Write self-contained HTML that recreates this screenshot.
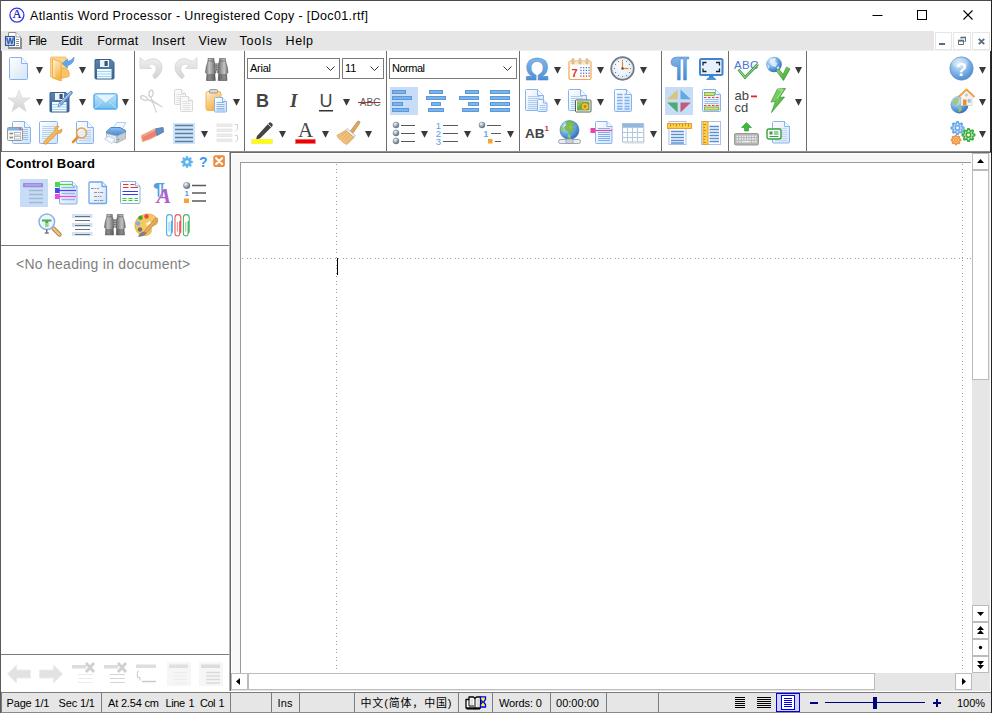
<!DOCTYPE html>
<html><head><meta charset="utf-8"><title>Atlantis Word Processor - Unregistered Copy - [Doc01.rtf]</title>
<style>
html,body{margin:0;padding:0;}
body{width:992px;height:713px;overflow:hidden;position:relative;background:#fff;
 font-family:"Liberation Sans","Noto Sans CJK SC",sans-serif;}
.t{position:absolute;white-space:nowrap;}
.a{position:absolute;}
.i{position:absolute;overflow:visible;}
div{box-sizing:border-box;}
</style></head><body>

<div style="position:absolute;left:0px;top:0px;width:992px;height:713px;background:#fff;"></div>
<span id="title" class="t" style="left:30px;top:8px;font-size:12.5px;line-height:16.5px;color:#000;letter-spacing:0.36px;">Atlantis Word Processor - Unregistered Copy - [Doc01.rtf]</span>
<svg class="i" style="left:860px;top:0" width="132" height="31" viewBox="0 0 132 31"><path d="M12.5 15.5H22.5" stroke="#000" stroke-width="1" fill="none"/><rect x="57.5" y="10.5" width="9" height="9" stroke="#000" stroke-width="1" fill="none"/><path d="M103.5 10.5L112.5 19.5M112.5 10.5L103.5 19.5" stroke="#000" stroke-width="1.1" fill="none"/></svg>
<div style="position:absolute;left:1px;top:31px;width:933px;height:19px;background:#e6e6e6;"></div>
<div style="position:absolute;left:1px;top:50px;width:990px;height:1px;background:#f0f0f0;"></div>
<span id="mFile" class="t" style="left:28.4px;top:33px;font-size:12.5px;line-height:16.5px;color:#000;letter-spacing:-0.55px;">File</span>
<span id="mEdit" class="t" style="left:61px;top:33px;font-size:12.5px;line-height:16.5px;color:#000;letter-spacing:-0.02px;">Edit</span>
<span id="mFormat" class="t" style="left:97.2px;top:33px;font-size:12.5px;line-height:16.5px;color:#000;letter-spacing:0.28px;">Format</span>
<span id="mInsert" class="t" style="left:152px;top:33px;font-size:12.5px;line-height:16.5px;color:#000;letter-spacing:0.35px;">Insert</span>
<span id="mView" class="t" style="left:198.5px;top:33px;font-size:12.5px;line-height:16.5px;color:#000;letter-spacing:0.38px;">View</span>
<span id="mTools" class="t" style="left:239.5px;top:33px;font-size:12.5px;line-height:16.5px;color:#000;letter-spacing:0.83px;">Tools</span>
<span id="mHelp" class="t" style="left:285.6px;top:33px;font-size:12.5px;line-height:16.5px;color:#000;letter-spacing:0.59px;">Help</span>
<div style="position:absolute;left:935px;top:32px;width:17px;height:18px;background:#fff;border:1px solid #e6e6e6;"></div>
<div style="position:absolute;left:953px;top:32px;width:18px;height:18px;background:#fff;border:1px solid #e6e6e6;"></div>
<div style="position:absolute;left:972px;top:32px;width:18px;height:18px;background:#fff;border:1px solid #e6e6e6;"></div>
<svg class="i" style="left:935px;top:32px" width="56" height="18" viewBox="0 0 56 18"><rect x="4" y="11" width="6" height="2" fill="#5a6e84"/><path d="M23.500 9H28.500V12.500H23.500Z" stroke="#5a6e84" stroke-width="1" fill="none"/><path d="M23 8.500H29" stroke="#5a6e84" stroke-width="1.600"/><path d="M26 6.500V5.500H30.500V9.500H29.500" stroke="#5a6e84" stroke-width="1" fill="none"/><path d="M25.500 5.500H31" stroke="#5a6e84" stroke-width="1.600"/><path d="M43.800 6.800L49.200 12.200M49.200 6.800L43.800 12.200" stroke="#5a6e84" stroke-width="1.900" fill="none"/></svg>
<div style="position:absolute;left:1px;top:51px;width:990px;height:100px;background:#fff;"></div>
<div style="position:absolute;left:134px;top:51px;width:1px;height:100px;background:#6e6e6e;"></div>
<div style="position:absolute;left:244px;top:51px;width:1px;height:100px;background:#6e6e6e;"></div>
<div style="position:absolute;left:386px;top:51px;width:1px;height:100px;background:#6e6e6e;"></div>
<div style="position:absolute;left:519px;top:51px;width:1px;height:100px;background:#6e6e6e;"></div>
<div style="position:absolute;left:661px;top:51px;width:1px;height:100px;background:#6e6e6e;"></div>
<div style="position:absolute;left:728px;top:51px;width:1px;height:100px;background:#6e6e6e;"></div>
<div style="position:absolute;left:806px;top:51px;width:1px;height:100px;background:#6e6e6e;"></div>
<div style="position:absolute;left:1px;top:151px;width:990px;height:1px;background:#767676;"></div>
<div style="position:absolute;left:247px;top:58px;width:93px;height:21px;background:#fff;border:1px solid #7a7a7a;"></div>
<span id="cFont" class="t" style="left:250px;top:61px;font-size:11px;line-height:15px;color:#000;letter-spacing:-0.25px;">Arial</span>
<svg class="i" style="left:326px;top:66px" width="9" height="6" viewBox="0 0 9 6"><path d="M0.500 0.500L4.500 4.500L8.500 0.500" stroke="#333" stroke-width="1" fill="none"/></svg>
<div style="position:absolute;left:342px;top:58px;width:42px;height:21px;background:#fff;border:1px solid #7a7a7a;"></div>
<span id="cSize" class="t" style="left:345px;top:61px;font-size:11px;line-height:15px;color:#000;letter-spacing:0px;">11</span>
<svg class="i" style="left:370px;top:66px" width="9" height="6" viewBox="0 0 9 6"><path d="M0.500 0.500L4.500 4.500L8.500 0.500" stroke="#333" stroke-width="1" fill="none"/></svg>
<div style="position:absolute;left:389px;top:58px;width:128px;height:21px;background:#fff;border:1px solid #7a7a7a;"></div>
<span id="cStyle" class="t" style="left:392px;top:61px;font-size:11px;line-height:15px;color:#000;letter-spacing:-0.49px;">Normal</span>
<svg class="i" style="left:503px;top:66px" width="9" height="6" viewBox="0 0 9 6"><path d="M0.500 0.500L4.500 4.500L8.500 0.500" stroke="#333" stroke-width="1" fill="none"/></svg>
<div style="position:absolute;left:1px;top:152px;width:228px;height:539px;background:#fff;"></div>
<span id="cb" class="t" style="left:6px;top:155px;font-size:13px;line-height:17px;color:#000;letter-spacing:0.13px;font-weight:bold;">Control Board</span>
<div style="position:absolute;left:1px;top:245px;width:228px;height:1px;background:#7a7a7a;"></div>
<span id="nohead" class="t" style="left:16px;top:255px;font-size:14px;line-height:18px;color:#808080;letter-spacing:0.26px;">&lt;No heading in document&gt;</span>
<div style="position:absolute;left:1px;top:654px;width:228px;height:1px;background:#7a7a7a;"></div>
<div style="position:absolute;left:229px;top:151px;width:1px;height:540px;background:#b4b4b4;"></div>
<div style="position:absolute;left:229px;top:151px;width:761px;height:1px;background:#8e8e8e;"></div>
<div style="position:absolute;left:230px;top:152px;width:1px;height:539px;background:#6a6a6a;"></div>
<div style="position:absolute;left:230px;top:152px;width:761px;height:1px;background:#6a6a6a;"></div>
<div style="position:absolute;left:231px;top:153px;width:740px;height:520px;background:#fff;"></div>
<div style="position:absolute;left:232px;top:154px;width:739px;height:519px;background:#f8f8f8;"></div>
<div style="position:absolute;left:240px;top:162px;width:731px;height:511px;background:#fff;border-left:1px solid #9a9a9a;border-top:1px solid #9a9a9a;"></div>
<div style="position:absolute;left:241px;top:258px;width:730px;height:1px;background:repeating-linear-gradient(90deg,transparent 0px,transparent 1px,#9c9c9c 1px 2px,transparent 2px,transparent 6px,#9c9c9c 6px 7px,transparent 7px,transparent 8px);"></div>
<div style="position:absolute;left:336px;top:163px;width:1px;height:509px;background:repeating-linear-gradient(180deg,transparent 0px,transparent 1px,#9c9c9c 1px 2px,transparent 2px,transparent 6px,#9c9c9c 6px 7px,transparent 7px,transparent 8px);"></div>
<div style="position:absolute;left:962px;top:163px;width:1px;height:509px;background:repeating-linear-gradient(180deg,transparent 0px,transparent 1px,#9c9c9c 1px 2px,transparent 2px,transparent 6px,#9c9c9c 6px 7px,transparent 7px,transparent 8px);"></div>
<div style="position:absolute;left:337px;top:258px;width:1px;height:17px;background:#000;"></div>
<div style="position:absolute;left:972px;top:153px;width:18px;height:520px;background:#e6e6e6;"></div>
<div style="position:absolute;left:972px;top:170px;width:17px;height:210px;background:#fff;border:1px solid #bcbcbc;"></div>
<div style="position:absolute;left:972px;top:153px;width:17px;height:17px;background:#fff;border:1px solid #bcbcbc;"></div>
<svg class="i" style="left:972px;top:153px" width="17" height="17" viewBox="0 0 17 17"><path d="M5 10H12L8.500 6Z" fill="#000"/></svg>
<div style="position:absolute;left:972px;top:605px;width:17px;height:17px;background:#fff;border:1px solid #bcbcbc;"></div>
<svg class="i" style="left:972px;top:605px" width="17" height="17" viewBox="0 0 17 17"><path d="M5 7H12L8.500 11Z" fill="#000"/></svg>
<div style="position:absolute;left:972px;top:622px;width:17px;height:17px;background:#fff;border:1px solid #bcbcbc;"></div>
<svg class="i" style="left:972px;top:622px" width="17" height="17" viewBox="0 0 17 17"><path d="M5 8H12L8.500 4ZM5 12H12L8.500 8Z" fill="#000"/></svg>
<div style="position:absolute;left:972px;top:639px;width:17px;height:17px;background:#fff;border:1px solid #bcbcbc;"></div>
<svg class="i" style="left:972px;top:639px" width="17" height="17" viewBox="0 0 17 17"><circle cx="8.500" cy="8.500" r="1.700" fill="#000"/></svg>
<div style="position:absolute;left:972px;top:656px;width:17px;height:17px;background:#fff;border:1px solid #bcbcbc;"></div>
<svg class="i" style="left:972px;top:656px" width="17" height="17" viewBox="0 0 17 17"><path d="M5 5H12L8.500 9ZM5 9H12L8.500 13Z" fill="#000"/></svg>
<div style="position:absolute;left:231px;top:673px;width:759px;height:18px;background:#e6e6e6;"></div>
<div style="position:absolute;left:248px;top:673px;width:627px;height:17px;background:#fff;border:1px solid #bcbcbc;"></div>
<div style="position:absolute;left:231px;top:673px;width:17px;height:17px;background:#fff;border:1px solid #bcbcbc;"></div>
<svg class="i" style="left:231px;top:673px" width="17" height="17" viewBox="0 0 17 17"><path d="M9 5V12L5 8.500Z" fill="#000"/></svg>
<div style="position:absolute;left:955px;top:673px;width:17px;height:17px;background:#fff;border:1px solid #bcbcbc;"></div>
<svg class="i" style="left:955px;top:673px" width="17" height="17" viewBox="0 0 17 17"><path d="M7 5V12L11 8.500Z" fill="#000"/></svg>
<div style="position:absolute;left:1px;top:691px;width:990px;height:1px;background:#fff;"></div>
<div style="position:absolute;left:0px;top:692px;width:992px;height:21px;background:#e6e6e6;"></div>
<div style="position:absolute;left:0px;top:692px;width:992px;height:1px;background:#7c7c7c;"></div>
<div style="position:absolute;left:0px;top:712px;width:992px;height:1px;background:#8a8a8a;"></div>
<div style="position:absolute;left:1px;top:693px;width:1px;height:19px;background:#7c7c7c;"></div>
<div style="position:absolute;left:101px;top:693px;width:1px;height:19px;background:#7c7c7c;"></div>
<div style="position:absolute;left:230px;top:693px;width:1px;height:19px;background:#7c7c7c;"></div>
<div style="position:absolute;left:271px;top:693px;width:1px;height:19px;background:#7c7c7c;"></div>
<div style="position:absolute;left:299px;top:693px;width:1px;height:19px;background:#7c7c7c;"></div>
<div style="position:absolute;left:354px;top:693px;width:1px;height:19px;background:#7c7c7c;"></div>
<div style="position:absolute;left:458px;top:693px;width:1px;height:19px;background:#7c7c7c;"></div>
<div style="position:absolute;left:492px;top:693px;width:1px;height:19px;background:#7c7c7c;"></div>
<div style="position:absolute;left:550px;top:693px;width:1px;height:19px;background:#7c7c7c;"></div>
<div style="position:absolute;left:606px;top:693px;width:1px;height:19px;background:#7c7c7c;"></div>
<div style="position:absolute;left:658px;top:693px;width:1px;height:19px;background:#7c7c7c;"></div>
<span id="sPage" class="t" style="left:6.5px;top:696px;font-size:11px;line-height:15px;color:#000;letter-spacing:-0.15px;">Page 1/1</span>
<span id="sSec" class="t" style="left:58.5px;top:696px;font-size:11px;line-height:15px;color:#000;letter-spacing:-0.14px;">Sec 1/1</span>
<span id="sAt" class="t" style="left:108px;top:696px;font-size:11px;line-height:15px;color:#000;letter-spacing:-0.18px;">At 2.54 cm</span>
<span id="sLine" class="t" style="left:165.5px;top:696px;font-size:11px;line-height:15px;color:#000;letter-spacing:-0.43px;">Line</span>
<span id="sLine1" class="t" style="left:188.5px;top:696px;font-size:11px;line-height:15px;color:#000;letter-spacing:0px;">1</span>
<span id="sCol" class="t" style="left:200px;top:696px;font-size:11px;line-height:15px;color:#000;letter-spacing:-0.51px;">Col</span>
<span id="sCol1" class="t" style="left:218.5px;top:696px;font-size:11px;line-height:15px;color:#000;letter-spacing:0px;">1</span>
<span id="sIns" class="t" style="left:277.5px;top:696px;font-size:11px;line-height:15px;color:#000;letter-spacing:0.16px;">Ins</span>
<span id="sLang" class="t" style="left:360.5px;top:696px;font-size:11px;line-height:15px;color:#000;letter-spacing:0.83px;">中文(简体，中国)</span>
<span id="sWords" class="t" style="left:499px;top:696px;font-size:11px;line-height:15px;color:#000;letter-spacing:-0.12px;">Words: 0</span>
<span id="sTime" class="t" style="left:556px;top:696px;font-size:11px;line-height:15px;color:#000;letter-spacing:0.02px;">00:00:00</span>
<span id="sZoom" class="t" style="left:957px;top:696px;font-size:11px;line-height:15px;color:#000;letter-spacing:-0.05px;">100%</span>
<svg class="i" style="left:730px;top:692px" width="225" height="21" viewBox="0 0 225 21"><g stroke="#000" stroke-width="1" fill="none"><path d="M5 5.500H15M5 7.500H15M5 9.500H15M5 11.500H15M5 13.500H15M5 15.500H15"/><path d="M27 5.500H41M27 7.500H41M27 9.500H41M27 11.500H41M27 13.500H41M27 15.500H41"/></g><rect x="46.500" y="1.500" width="23" height="18" fill="#d2d2f6" stroke="#0000f0" stroke-width="1"/><rect x="51.500" y="3.500" width="13" height="14" fill="#fff" stroke="#0000f0"/><path d="M54 6.500H62M54 8.500H62M54 10.500H62M54 12.500H62M54 14.500H62" stroke="#0000f0"/><path d="M80 11H88" stroke="#000080" stroke-width="2"/><path d="M95 10.500H195" stroke="#000080" stroke-width="1"/><rect x="143" y="5" width="4" height="12" fill="#000080"/><path d="M203 11H211M207 7V15" stroke="#000080" stroke-width="2"/></svg>
<div style="position:absolute;left:0px;top:0px;width:992px;height:1px;background:#4a4a4a;"></div>
<div style="position:absolute;left:0px;top:0px;width:1px;height:713px;background:#5a5a5a;"></div>
<div style="position:absolute;left:991px;top:0px;width:1px;height:713px;background:#222;"></div>
<div style="position:absolute;left:990px;top:51px;width:1px;height:101px;background:#2e2e2e;"></div>
<div style="position:absolute;left:1px;top:51px;width:1px;height:101px;background:#6a6a6a;"></div>
<svg width="0" height="0" style="position:absolute"><defs>
<linearGradient id="gDoc" x1="0" y1="0" x2="1" y2="1"><stop offset="0" stop-color="#ffffff"/><stop offset="1" stop-color="#d3e3f8"/></linearGradient>
<linearGradient id="gDocV" x1="0" y1="0" x2="0" y2="1"><stop offset="0" stop-color="#fafcff"/><stop offset="1" stop-color="#dce9fa"/></linearGradient>
<linearGradient id="gFold" x1="0" y1="0" x2="1" y2="1"><stop offset="0" stop-color="#fde3a8"/><stop offset="1" stop-color="#f3a73a"/></linearGradient>
<linearGradient id="gFlop" x1="0" y1="0" x2="0" y2="1"><stop offset="0" stop-color="#5a84b0"/><stop offset="1" stop-color="#3a6290"/></linearGradient>
<linearGradient id="gEnv" x1="0" y1="0" x2="0" y2="1"><stop offset="0" stop-color="#c9e9fc"/><stop offset="1" stop-color="#6dbdf0"/></linearGradient>
<linearGradient id="gGray" x1="0" y1="0" x2="0" y2="1"><stop offset="0" stop-color="#f0f0f0"/><stop offset="1" stop-color="#d2d2d2"/></linearGradient>
<linearGradient id="gGrayD" x1="0" y1="0" x2="0" y2="1"><stop offset="0" stop-color="#b4b4b4"/><stop offset="0.600" stop-color="#8a8a8a"/><stop offset="1" stop-color="#6e6e6e"/></linearGradient>
<linearGradient id="gBlue" x1="0" y1="0" x2="0" y2="1"><stop offset="0" stop-color="#8fc0f0"/><stop offset="1" stop-color="#3f86d0"/></linearGradient>
<linearGradient id="gOr" x1="0" y1="0" x2="1" y2="1"><stop offset="0" stop-color="#fbd38a"/><stop offset="1" stop-color="#ee9a2a"/></linearGradient>
<linearGradient id="gGreen" x1="0" y1="0" x2="1" y2="1"><stop offset="0" stop-color="#9be07a"/><stop offset="1" stop-color="#2f9e2a"/></linearGradient>
<radialGradient id="gBall" cx="0.35" cy="0.3" r="0.8"><stop offset="0" stop-color="#ffffff"/><stop offset="0.450" stop-color="#a4b2c2"/><stop offset="1" stop-color="#465464"/></radialGradient>
<radialGradient id="gGlobe" cx="0.35" cy="0.3" r="0.8"><stop offset="0" stop-color="#e8f4ff"/><stop offset="0.5" stop-color="#6aaae8"/><stop offset="1" stop-color="#2a60b0"/></radialGradient>
<radialGradient id="gHelp" cx="0.4" cy="0.3" r="0.8"><stop offset="0" stop-color="#d8ecfc"/><stop offset="0.550" stop-color="#7cb0e4"/><stop offset="1" stop-color="#3f7ec8"/></radialGradient>
<radialGradient id="gClock" cx="0.45" cy="0.4" r="0.7"><stop offset="0" stop-color="#ffffff"/><stop offset="0.7" stop-color="#e4eef8"/><stop offset="1" stop-color="#b8cce0"/></radialGradient>

<linearGradient id="gBar" x1="0" y1="0" x2="1" y2="0"><stop offset="0" stop-color="#6e6e6e"/><stop offset="0.350" stop-color="#c4c4c4"/><stop offset="0.650" stop-color="#9a9a9a"/><stop offset="1" stop-color="#606060"/></linearGradient>
<linearGradient id="gPaste" x1="0" y1="0" x2="0.600" y2="1"><stop offset="0" stop-color="#fef1d0"/><stop offset="1" stop-color="#f5ad3c"/></linearGradient>
<linearGradient id="gFold2" x1="0" y1="0" x2="0.300" y2="1"><stop offset="0" stop-color="#fef0cc"/><stop offset="1" stop-color="#f7b548"/></linearGradient></defs></svg>
<svg class="i" style="left:8px;top:56px" width="22" height="26" viewBox="0 0 22 26"><path d="M2.5 1.5H13.5L19.5 7.5V22.5Q19.5 23.5 18.5 23.5H2.5Q1.5 23.5 1.5 22.5V2.5Q1.5 1.5 2.5 1.5Z" fill="url(#gDoc)" stroke="#86b4f0" stroke-width="1"/><path d="M13.5 1.5V7.5H19.5" fill="#f4f9ff" stroke="#86b4f0" stroke-width="1" stroke-linejoin="round"/></svg>
<svg class="i" style="left:49px;top:56px" width="26" height="26" viewBox="0 0 26 26"><path d="M1.500 2Q1.500 1 2.500 1H16Q17 1 17.200 2V19.500L1.500 21Z" fill="#fbd490" stroke="#f2b860" stroke-width="0.800"/><path d="M12.200 12Q17 11 19 14Q21 17 20 20.500L12.200 22.500Z" fill="#f9c468" stroke="#f0a840" stroke-width="0.800"/><path d="M3.600 2.800L12.200 6V25L3.600 22Z" fill="url(#gFold2)" stroke="#f2a83c" stroke-width="0.900" stroke-linejoin="round"/><path d="M5 5V21" stroke="#fff" stroke-opacity="0.700" stroke-width="1"/><path d="M13.100 7.500L18.500 3V5.300Q22.500 5 25 1Q25.500 7.500 18.500 9.800V12Z" fill="#62a6ea" stroke="#4a8ad8" stroke-width="0.600" stroke-linejoin="round"/></svg>
<svg class="i" style="left:94px;top:59px" width="22" height="22" viewBox="0 0 22 22"><g transform="translate(0.5,0)"><path d="M1 .5H16.500L19.500 3.500V19Q19.500 20 18.500 20H1.500Q.5 20 .5 19V1Q.5 .5 1 .5Z" fill="url(#gFlop)" stroke="#3a5e8c" stroke-width="1"/><rect x="5.500" y="1" width="9" height="7" fill="#eef2f6"/><rect x="10" y="2" width="3.200" height="5" fill="#33557c"/><rect x="2.500" y="10" width="14.500" height="9.500" fill="#f4fbff"/><path d="M2.500 12.500H17M2.500 15H17M2.500 17.500H17" stroke="#9ad4f6" stroke-width="1.200"/></g></svg>
<svg class="i" style="left:7px;top:89px" width="24" height="24" viewBox="0 0 24 24"><path d="M12 1L15 9H23L16.500 14L19 22.500L12 17.500L5 22.500L7.500 14L1 9H9Z" fill="url(#gGray)" stroke="#dcdcdc" stroke-width="0.800" stroke-linejoin="round"/></svg>
<svg class="i" style="left:49px;top:89px" width="26" height="24" viewBox="0 0 26 24"><g transform="translate(0.5,3)"><path d="M1 .5H16.500L19.500 3.500V19Q19.500 20 18.500 20H1.500Q.5 20 .5 19V1Q.5 .5 1 .5Z" fill="url(#gFlop)" stroke="#3a5e8c" stroke-width="1"/><rect x="5.500" y="1" width="9" height="7" fill="#eef2f6"/><rect x="10" y="2" width="3.200" height="5" fill="#33557c"/><rect x="2.500" y="10" width="14.500" height="9.500" fill="#f4fbff"/><path d="M2.500 12.500H17M2.500 15H17M2.500 17.500H17" stroke="#9ad4f6" stroke-width="1.200"/></g><path d="M9 17.500L10.300 14L21 2.600Q22 1.800 23 2.600Q23.800 3.600 23 4.600L12.300 16.200Z" fill="#7aaae2" stroke="#3f6eb0" stroke-width="0.700" stroke-linejoin="round"/><path d="M11.500 14L21.500 3.500" stroke="#d8e8f8" stroke-width="0.700"/><path d="M9 17.500L10.300 14L12.300 16.200Z" fill="#f0f0f0" stroke="#777" stroke-width="0.500"/></svg>
<svg class="i" style="left:92.5px;top:92.5px" width="26" height="18" viewBox="0 0 26 18"><rect x="1" y="1" width="23" height="15" rx="1.500" fill="url(#gEnv)" stroke="#4fa9ea" stroke-width="1.400"/><path d="M1.500 1.500L12.500 10L23.500 1.500" fill="#e4f3fd" stroke="#8fcbf4" stroke-width="1"/><path d="M1.500 15.500L9.500 8M23.500 15.500L15.500 8" stroke="#bfe2f9" stroke-width="1" fill="none"/></svg>
<svg class="i" style="left:7px;top:120px" width="25" height="25" viewBox="0 0 25 25"><path d="M6.5 1.5H17.5L23.5 7.5V22.5Q23.5 23.5 22.5 23.5H6.5Q5.5 23.5 5.5 22.5V2.5Q5.5 1.5 6.5 1.5Z" fill="url(#gDoc)" stroke="#86b4f0" stroke-width="1"/><path d="M17.5 1.5V7.5H23.5" fill="#f4f9ff" stroke="#86b4f0" stroke-width="1" stroke-linejoin="round"/><path d="M13 9.5H21M13 11.5H21M13 13.5H21M13 15.5H21M13 17.5H21M13 19.5H21" stroke="#9cc0ea" stroke-width="1" fill="none"/><rect x="0.500" y="7.500" width="15" height="13" rx="1" fill="#f6f6f6" stroke="#9a9a9a"/><rect x="1" y="8" width="14" height="2.500" fill="#7fb2e8"/><rect x="12.500" y="8.500" width="1.500" height="1.500" fill="#e04040"/><path d="M2.500 13.500H6M2.500 17.500H6" stroke="#888" stroke-width="1.400"/><rect x="7.500" y="12.500" width="6" height="2.500" fill="#fff" stroke="#aaa" stroke-width="0.800"/><rect x="7.500" y="16.500" width="6" height="2.500" fill="#fff" stroke="#aaa" stroke-width="0.800"/></svg>
<svg class="i" style="left:38px;top:120px" width="26" height="25" viewBox="0 0 26 25"><rect x="1.500" y="1.500" width="18" height="22" rx="1" fill="url(#gDoc)" stroke="#86b4f0"/><path d="M4 6.5H17M4 8.5H17M4 10.5H17M4 12.5H17M4 14.5H17M4 16.5H17M4 18.5H17" stroke="#b8d2f0" stroke-width="1" fill="none"/><path d="M6 21.500L17 10.500Q16 7.500 18.500 6L21 6.500L19 9L21 11L23.500 9L24 11.500Q22.500 14 19.500 13L8.500 24Q7 24.500 6 23.500Q5.500 22.500 6 21.500Z" fill="url(#gOr)" stroke="#e0922a" stroke-width="0.800"/></svg>
<svg class="i" style="left:70px;top:120px" width="26" height="26" viewBox="0 0 26 26"><path d="M7.5 1.5H17.5L23.5 7.5V22.5Q23.5 23.5 22.5 23.5H7.5Q6.5 23.5 6.5 22.5V2.5Q6.5 1.5 7.5 1.5Z" fill="url(#gDoc)" stroke="#86b4f0" stroke-width="1"/><path d="M17.5 1.5V7.5H23.5" fill="#f4f9ff" stroke="#86b4f0" stroke-width="1" stroke-linejoin="round"/><path d="M9 10.5H21M9 12.5H21M9 14.5H21M9 16.5H21M9 18.5H21M9 20.5H21" stroke="#b8d2f0" stroke-width="1" fill="none"/><path d="M3 22L8 17" stroke="#e3902c" stroke-width="2.600" stroke-linecap="round"/><circle cx="11.500" cy="13" r="5" fill="#e4f0fb" fill-opacity="0.900" stroke="#e9a04a" stroke-width="1.600"/><path d="M8.500 12Q9.500 9.500 12 9.500" stroke="#fff" stroke-width="1.200" fill="none"/></svg>
<svg class="i" style="left:103px;top:121px" width="26" height="24" viewBox="0 0 26 24"><path d="M9 8L14 1.500H23L19 8.500Z" fill="#f4f9ff" stroke="#9cc4ee" stroke-width="0.800"/><path d="M3.500 10.500L8 6.500H17L22.500 9.500V11L14 15L3.500 12.500Z" fill="url(#gBlue)" stroke="#2f70b8" stroke-width="0.800"/><path d="M3.500 12.500L14 15V22L3.500 18.500Z" fill="#e6e9ec" stroke="#a8b0b8" stroke-width="0.800"/><path d="M14 15L22.500 11V17.500L14 22Z" fill="#c6ccd2" stroke="#a0a8b0" stroke-width="0.800"/><path d="M1.500 18L5.500 15.500L12 18L9 22.500Z" fill="#f8fbff" stroke="#a9c9ee" stroke-width="0.800"/><circle cx="15.500" cy="18.500" r="0.800" fill="#40c040"/></svg>
<svg class="i" style="left:139px;top:56px" width="26" height="26" viewBox="0 0 26 26"><path d="M1 1.500V12.500H12.500L9 9.500Q13.500 6.500 16.500 10Q19 14 13.500 19.500L16 23Q26 15 22 7Q17 -1 5.500 5.500Z" fill="url(#gGray)" stroke="#d6d6d6" stroke-width="0.800" stroke-linejoin="round"/></svg>
<svg class="i" style="left:171.5px;top:56px" width="26" height="26" viewBox="0 0 26 26"><g transform="translate(26,0) scale(-1,1)"><path d="M1 1.500V12.500H12.500L9 9.500Q13.500 6.500 16.500 10Q19 14 13.500 19.500L16 23Q26 15 22 7Q17 -1 5.500 5.500Z" fill="url(#gGray)" stroke="#d6d6d6" stroke-width="0.800" stroke-linejoin="round"/></g></svg>
<svg class="i" style="left:204.5px;top:57.5px" width="24" height="24" viewBox="0 0 24 24"><g transform="scale(1.0)"><path d="M3 0.500H9V3L9.500 4L10.500 9.500L11 14.500L9.800 16L10.300 22.500H1.500L2 16L0.500 14.500Q1 8 2.700 4L3 3Z" fill="url(#gBar)" stroke="#555" stroke-width="0.600" stroke-linejoin="round"/><path d="M2 16H9.800L10.300 22.500H1.500Z" fill="#4a4a4a" fill-opacity="0.450"/><path d="M3 3H9" stroke="#555" stroke-width="0.600"/><g transform="translate(23.500,0) scale(-1,1)"><path d="M3 0.500H9V3L9.500 4L10.500 9.500L11 14.500L9.800 16L10.300 22.500H1.500L2 16L0.500 14.500Q1 8 2.700 4L3 3Z" fill="url(#gBar)" stroke="#555" stroke-width="0.600" stroke-linejoin="round"/><path d="M2 16H9.800L10.300 22.500H1.500Z" fill="#4a4a4a" fill-opacity="0.450"/><path d="M3 3H9" stroke="#555" stroke-width="0.600"/></g><rect x="9.800" y="5.500" width="4" height="7.500" fill="#707070"/><path d="M10.500 6.300H13M10.500 8.300H13M10.500 10.300H13M10.500 12.200H13" stroke="#e0e0e0" stroke-width="0.900"/><path d="M11.750 5.500V13" stroke="#707070" stroke-width="0.800"/></g></svg>
<svg class="i" style="left:139px;top:88.5px" width="26" height="26" viewBox="0 0 26 26"><g fill="none" stroke="#cdcdcd" stroke-width="1.200"><ellipse cx="12" cy="4.500" rx="2" ry="3.500" transform="rotate(8 12 4.500)"/><ellipse cx="5" cy="9" rx="3.500" ry="2" transform="rotate(25 5 9)"/></g><path d="M12 8L17.500 23.500L13.500 13Z M8 10.500L23.500 18L14 11.500Z" fill="#e0e0e0" stroke="#cfcfcf" stroke-width="0.800" stroke-linejoin="round"/></svg>
<svg class="i" style="left:173px;top:88px" width="22" height="25" viewBox="0 0 22 25"><path d="M2.5 1.5H8.5L12.5 5.5V15.5Q12.5 16.5 11.5 16.5H2.5Q1.5 16.5 1.5 15.5V2.5Q1.5 1.5 2.5 1.5Z" fill="#f8f8f8" stroke="#d8d8d8" stroke-width="1"/><path d="M8.5 1.5V5.5H12.5" fill="#f4f9ff" stroke="#d8d8d8" stroke-width="1" stroke-linejoin="round"/><path d="M3.5 6.5H10.5M3.5 8.5H10.5M3.5 10.5H10.5M3.5 12.5H10.5M3.5 14.5H10.5" stroke="#e2e2e2" stroke-width="1" fill="none"/><path d="M8.5 8.5H15.5L19.5 12.5V22.5Q19.5 23.5 18.5 23.5H8.5Q7.5 23.5 7.5 22.5V9.5Q7.5 8.5 8.5 8.5Z" fill="#f8f8f8" stroke="#d8d8d8" stroke-width="1"/><path d="M15.5 8.5V12.5H19.5" fill="#f4f9ff" stroke="#d8d8d8" stroke-width="1" stroke-linejoin="round"/><path d="M9.5 13.5H17.5M9.5 15.5H17.5M9.5 17.5H17.5M9.5 19.5H17.5M9.5 21.5H17.5" stroke="#e2e2e2" stroke-width="1" fill="none"/></svg>
<svg class="i" style="left:204.5px;top:89px" width="24" height="25" viewBox="0 0 24 25"><rect x="1" y="2.500" width="15" height="19" rx="2" fill="url(#gPaste)" stroke="#f2b45a" stroke-width="1"/><rect x="4.500" y="0.500" width="8" height="3.500" rx="1" fill="#d8d8d8" stroke="#8a8a8a" stroke-width="0.800"/><path d="M10.5 8.5H17.5L21.5 12.5V22.0Q21.5 23.0 20.5 23.0H10.5Q9.5 23.0 9.5 22.0V9.5Q9.5 8.5 10.5 8.5Z" fill="url(#gDoc)" stroke="#86b4f0" stroke-width="1"/><path d="M17.5 8.5V12.5H21.5" fill="#f4f9ff" stroke="#86b4f0" stroke-width="1" stroke-linejoin="round"/><path d="M11.5 13.5H19.5M11.5 15.5H19.5M11.5 17.5H19.5M11.5 19.5H19.5M11.5 21H19.5" stroke="#8ab6ea" stroke-width="1" fill="none"/></svg>
<svg class="i" style="left:140px;top:125px" width="25" height="18" viewBox="0 0 25 18"><path d="M1.500 10.500L15 4L23 2.500L23.500 7L10 14L2.500 16.500Z" fill="#f08070" stroke="#e8a878" stroke-width="1" stroke-linejoin="round"/><path d="M15 4L23 2.500L23.500 7L17 10.500Z" fill="#5f8fc8" stroke="#4a78b0" stroke-width="0.600" stroke-linejoin="round"/><path d="M1.500 10.500L15 4L16 5.500L3 12Z" fill="#f8a898" fill-opacity="0.800"/></svg>
<svg class="i" style="left:173px;top:123px" width="23" height="22" viewBox="0 0 23 22"><rect x="0" y="0" width="22" height="21" fill="#cfe2f7"/><path d="M2 2.5H20M2 6.5H20M2 10.5H20M2 14.5H20M2 18.5H20" stroke="#5a7fa6" stroke-width="1.4" fill="none"/></svg>
<svg class="i" style="left:216px;top:123px" width="24" height="22" viewBox="0 0 24 22"><g fill="#ececec" stroke="#dedede" stroke-width="0.600"><rect x="1" y="1" width="15" height="2.500"/><rect x="1" y="6" width="15" height="2.500"/><rect x="1" y="11" width="15" height="2.500"/><rect x="1" y="16" width="15" height="2.500"/></g><path d="M18.500 1.500H21.500V6L19 8.500M18.500 12.500H21.500V17L19 19.500" stroke="#d4d4d4" stroke-width="1" fill="none"/></svg>
<svg class="i" style="left:255.5px;top:92.7px" width="16" height="18" viewBox="0 0 16 18"><text x="0" y="14" font-family="'Liberation Sans',sans-serif" font-weight="bold" font-size="18" fill="#444">B</text></svg>
<svg class="i" style="left:289px;top:92.7px" width="14" height="18" viewBox="0 0 14 18"><text x="1" y="14" font-family="'Liberation Serif',serif" font-style="italic" font-weight="bold" font-size="19" fill="#444">I</text></svg>
<svg class="i" style="left:319px;top:92.7px" width="16" height="20" viewBox="0 0 16 20"><text x="0.500" y="13.500" font-family="'Liberation Sans',sans-serif" font-size="18" fill="#444">U</text><rect x="0" y="17" width="14" height="1.500" fill="#333"/></svg>
<svg class="i" style="left:358px;top:95px" width="26" height="14" viewBox="0 0 26 14"><text x="1.800" y="10.500" font-family="'Liberation Sans',sans-serif" font-size="10" fill="#5e5e5e">ABC</text><rect x="0" y="7" width="22.500" height="1" fill="#a83030"/></svg>
<svg class="i" style="left:251px;top:120.5px" width="24" height="24" viewBox="0 0 24 24"><path d="M6 15L16.500 3.500L18.500 1.500Q19.500 1 20.500 2L21.500 3Q22 4 21.500 5L19.500 7L9 17.500L5 18.500Z" fill="#444"/><path d="M17 3L20 6" stroke="#fff" stroke-width="0.800"/><rect x="0.700" y="18.200" width="20.800" height="4.500" fill="#ffff00" stroke="#e0e0a0" stroke-width="0.500"/></svg>
<svg class="i" style="left:294.5px;top:120.5px" width="22" height="24" viewBox="0 0 22 24"><text x="3" y="15.500" font-family="'Liberation Serif',serif" font-size="21" fill="#444">A</text><rect x="0.300" y="18.200" width="20.200" height="4.500" fill="#f00000" stroke="#e8a0a0" stroke-width="0.500"/></svg>
<svg class="i" style="left:335.5px;top:120px" width="26" height="26" viewBox="0 0 26 26"><path d="M14.500 11L21.500 1.500Q22.500 0.500 23.500 1.500Q24.500 2.500 23.500 3.500L17 13Z" fill="#e0a860" stroke="#b8803a" stroke-width="0.700"/><path d="M11 8.500L19.500 15.500L18 17.500L9.500 10.500Z" fill="#f0f0f0" stroke="#aaa" stroke-width="0.600"/><path d="M9.500 10.500L18 17.500L11 24.500Q8 23.500 4.500 20Q1.500 17.500 1 15.500Z" fill="#f2c27a" stroke="#d09a50" stroke-width="0.700"/><path d="M5 16.500L9.500 12M7 18.500L12 13.500M9 20.500L14 15.500M11 22.500L16 17.500" stroke="#d8a25a" stroke-width="0.800" fill="none"/></svg>
<svg class="i" style="left:390px;top:87px" width="28" height="28" viewBox="0 0 28 28"><rect width="28" height="28" fill="#c7dcf6"/><rect x="2.5" y="3.5" width="13" height="3" fill="#7db3ea" stroke="#5a98dc" stroke-width="1"/><rect x="2.5" y="9.5" width="19" height="3" fill="#7db3ea" stroke="#5a98dc" stroke-width="1"/><rect x="2.5" y="15.5" width="10" height="3" fill="#7db3ea" stroke="#5a98dc" stroke-width="1"/><rect x="2.5" y="21.5" width="16" height="3" fill="#7db3ea" stroke="#5a98dc" stroke-width="1"/></svg>
<svg class="i" style="left:422px;top:87px" width="28" height="28" viewBox="0 0 28 28"><rect x="7.5" y="3.5" width="13" height="3" fill="#7db3ea" stroke="#5a98dc" stroke-width="1"/><rect x="4.5" y="9.5" width="19" height="3" fill="#7db3ea" stroke="#5a98dc" stroke-width="1"/><rect x="9.5" y="15.5" width="9" height="3" fill="#7db3ea" stroke="#5a98dc" stroke-width="1"/><rect x="6.5" y="21.5" width="15" height="3" fill="#7db3ea" stroke="#5a98dc" stroke-width="1"/></svg>
<svg class="i" style="left:455px;top:87px" width="28" height="28" viewBox="0 0 28 28"><rect x="10.5" y="3.5" width="13" height="3" fill="#7db3ea" stroke="#5a98dc" stroke-width="1"/><rect x="4.5" y="9.5" width="19" height="3" fill="#7db3ea" stroke="#5a98dc" stroke-width="1"/><rect x="13.5" y="15.5" width="10" height="3" fill="#7db3ea" stroke="#5a98dc" stroke-width="1"/><rect x="7.5" y="21.5" width="16" height="3" fill="#7db3ea" stroke="#5a98dc" stroke-width="1"/></svg>
<svg class="i" style="left:486px;top:87px" width="28" height="28" viewBox="0 0 28 28"><rect x="4.5" y="3.5" width="19" height="3" fill="#7db3ea" stroke="#5a98dc" stroke-width="1"/><rect x="4.5" y="9.5" width="19" height="3" fill="#7db3ea" stroke="#5a98dc" stroke-width="1"/><rect x="4.5" y="15.5" width="19" height="3" fill="#7db3ea" stroke="#5a98dc" stroke-width="1"/><rect x="4.5" y="21.5" width="19" height="3" fill="#7db3ea" stroke="#5a98dc" stroke-width="1"/></svg>
<svg class="i" style="left:392px;top:121px" width="25" height="24" viewBox="0 0 25 24"><circle cx="4" cy="4" r="3" fill="url(#gBall)" stroke="#6a7888" stroke-width="0.500"/><circle cx="4" cy="12" r="3" fill="url(#gBall)" stroke="#6a7888" stroke-width="0.500"/><circle cx="4" cy="20" r="3" fill="url(#gBall)" stroke="#6a7888" stroke-width="0.500"/><path d="M9 4.5H23M9 12.5H23M9 20.5H23" stroke="#5a5a5a" stroke-width="1" fill="none"/></svg>
<svg class="i" style="left:435px;top:121px" width="25" height="24" viewBox="0 0 25 24"><g font-family="'Liberation Sans',sans-serif" font-size="9.500" fill="#5f9ce2"><text x="0.800" y="7.800">1</text><text x="0.800" y="15.800">2</text><text x="0.800" y="23.800">3</text></g><path d="M8 4.5H23M8 12.5H23M8 20.5H23" stroke="#5a5a5a" stroke-width="1" fill="none"/></svg>
<svg class="i" style="left:478px;top:121px" width="25" height="24" viewBox="0 0 25 24"><circle cx="4" cy="4" r="3" fill="url(#gBall)" stroke="#6a7888" stroke-width="0.500"/><text x="5.500" y="15.500" font-family="'Liberation Sans',sans-serif" font-size="8.500" font-weight="bold" fill="#6ea6e4">1</text><rect x="10" y="18" width="4.500" height="4.500" fill="#f5a530"/><path d="M9 4.500H23M13 12.500H23M17 20.500H23" stroke="#5a5a5a" stroke-width="1"/></svg>
<svg class="i" style="left:524.5px;top:56px" width="26" height="26" viewBox="0 0 26 26"><text x="0" y="23.500" font-family="'Liberation Sans',sans-serif" font-weight="bold" font-size="31" fill="url(#gBlue)" stroke="#3a7ac8" stroke-width="0.400" textLength="24" lengthAdjust="spacingAndGlyphs">Ω</text></svg>
<svg class="i" style="left:567.5px;top:57.5px" width="25" height="23" viewBox="0 0 25 23"><rect x="1" y="3" width="22" height="18.500" rx="1.500" fill="#fefefe" stroke="#f0a850" stroke-width="1.200"/><rect x="1.600" y="3.600" width="20.800" height="3" fill="#fce4c0"/><g fill="#d8d8d8" stroke="#c08840" stroke-width="0.500"><rect x="4" y="0.500" width="2" height="5.500" rx="1"/><rect x="11" y="0.500" width="2" height="5.500" rx="1"/><rect x="18" y="0.500" width="2" height="5.500" rx="1"/></g><text x="3.500" y="18.500" font-family="'Liberation Sans',sans-serif" font-weight="bold" font-size="11" fill="#e03030">7</text><rect x="12.3" y="9.0" width="1.300" height="1.300" fill="#4a7ad0"/><rect x="12.3" y="11.8" width="1.300" height="1.300" fill="#4a7ad0"/><rect x="12.3" y="14.6" width="1.300" height="1.300" fill="#4a7ad0"/><rect x="12.3" y="17.4" width="1.300" height="1.300" fill="#e04040"/><rect x="15.0" y="9.0" width="1.300" height="1.300" fill="#4a7ad0"/><rect x="15.0" y="11.8" width="1.300" height="1.300" fill="#4a7ad0"/><rect x="15.0" y="14.6" width="1.300" height="1.300" fill="#4a7ad0"/><rect x="15.0" y="17.4" width="1.300" height="1.300" fill="#e04040"/><rect x="17.7" y="9.0" width="1.300" height="1.300" fill="#4a7ad0"/><rect x="17.7" y="11.8" width="1.300" height="1.300" fill="#4a7ad0"/><rect x="17.7" y="14.6" width="1.300" height="1.300" fill="#4a7ad0"/><rect x="17.7" y="17.4" width="1.300" height="1.300" fill="#e04040"/><rect x="20.4" y="9.0" width="1.300" height="1.300" fill="#4a7ad0"/><rect x="20.4" y="11.8" width="1.300" height="1.300" fill="#4a7ad0"/><rect x="20.4" y="14.6" width="1.300" height="1.300" fill="#4a7ad0"/><rect x="20.4" y="17.4" width="1.300" height="1.300" fill="#e04040"/></svg>
<svg class="i" style="left:609.5px;top:56px" width="26" height="26" viewBox="0 0 26 26"><circle cx="12.500" cy="12.500" r="11.200" fill="url(#gClock)" stroke="#737b85" stroke-width="1.900"/><circle cx="12.500" cy="12.500" r="10" fill="none" stroke="#d8e2ee" stroke-width="0.800"/><circle cx="12.50" cy="4.50" r="0.550" fill="#667"/><circle cx="16.50" cy="5.57" r="0.550" fill="#667"/><circle cx="19.43" cy="8.50" r="0.550" fill="#667"/><circle cx="20.50" cy="12.50" r="0.550" fill="#667"/><circle cx="19.43" cy="16.50" r="0.550" fill="#667"/><circle cx="16.50" cy="19.43" r="0.550" fill="#667"/><circle cx="12.50" cy="20.50" r="0.550" fill="#667"/><circle cx="8.50" cy="19.43" r="0.550" fill="#667"/><circle cx="5.57" cy="16.50" r="0.550" fill="#667"/><circle cx="4.50" cy="12.50" r="0.550" fill="#667"/><circle cx="5.57" cy="8.50" r="0.550" fill="#667"/><circle cx="8.50" cy="5.57" r="0.550" fill="#667"/><path d="M12.500 12.500V5.500" stroke="#f08020" stroke-width="1.200"/><path d="M12.500 12.500H18.500" stroke="#f08020" stroke-width="1.200"/><circle cx="12.500" cy="12.500" r="1.300" fill="#556"/></svg>
<svg class="i" style="left:524px;top:88px" width="25" height="25" viewBox="0 0 25 25"><path d="M2.5 1.5H13.5L19.5 7.5V21.5Q19.5 22.5 18.5 22.5H2.5Q1.5 22.5 1.5 21.5V2.5Q1.5 1.5 2.5 1.5Z" fill="url(#gDoc)" stroke="#86b4f0" stroke-width="1"/><path d="M13.5 1.5V7.5H19.5" fill="#f4f9ff" stroke="#86b4f0" stroke-width="1" stroke-linejoin="round"/><path d="M4 8.5H16M4 10.5H16M4 12.5H16M4 14.5H16M4 16.5H16M4 18.5H16M4 20.5H16" stroke="#b0ccee" stroke-width="1" fill="none"/><path d="M14.5 11.5H19.5L23.0 15.0V22.5Q23.0 23.5 22.0 23.5H14.5Q13.5 23.5 13.5 22.5V12.5Q13.5 11.5 14.5 11.5Z" fill="url(#gDoc)" stroke="#86b4f0" stroke-width="1"/><path d="M19.5 11.5V15.0H23.0" fill="#f4f9ff" stroke="#86b4f0" stroke-width="1" stroke-linejoin="round"/><path d="M15.5 17.5H21.5M15.5 19.5H21.5M15.5 21.5H21.5" stroke="#b0ccee" stroke-width="1" fill="none"/></svg>
<svg class="i" style="left:567px;top:88px" width="26" height="25" viewBox="0 0 26 25"><path d="M2.5 1.5H13.5L19.5 7.5V21.5Q19.5 22.5 18.5 22.5H2.5Q1.5 22.5 1.5 21.5V2.5Q1.5 1.5 2.5 1.5Z" fill="url(#gDoc)" stroke="#86b4f0" stroke-width="1"/><path d="M13.5 1.5V7.5H19.5" fill="#f4f9ff" stroke="#86b4f0" stroke-width="1" stroke-linejoin="round"/><path d="M4 8.5H16M4 10.5H16M4 12.5H16M4 14.5H16M4 16.5H16M4 18.5H16M4 20.5H16" stroke="#b0ccee" stroke-width="1" fill="none"/><rect x="8.500" y="12" width="15.500" height="12" rx="1" fill="#fff" stroke="#5a5a5a" stroke-width="1"/><rect x="10" y="13.500" width="12.500" height="9" fill="#6ea640"/><path d="M10 13.500H17L10 20Z" fill="#8cc050"/><circle cx="18" cy="18.500" r="3.200" fill="#f6c030"/><circle cx="18" cy="18.500" r="1.400" fill="#d87018"/></svg>
<svg class="i" style="left:613px;top:88px" width="22" height="25" viewBox="0 0 22 25"><path d="M2.5 1.5H13.5L18.5 6.5V22.5Q18.5 23.5 17.5 23.5H2.5Q1.5 23.5 1.5 22.5V2.5Q1.5 1.5 2.5 1.5Z" fill="url(#gDoc)" stroke="#86b4f0" stroke-width="1"/><path d="M13.5 1.5V6.5H18.5" fill="#f4f9ff" stroke="#86b4f0" stroke-width="1" stroke-linejoin="round"/><path d="M4 6.5H9.5M4 9.5H9.5M4 12.5H9.5M4 15.5H9.5M4 18.5H9.5M4 21H9.5" stroke="#7fb0ea" stroke-width="1.6" fill="none"/><path d="M11.5 9.5H16.5M11.5 12.5H16.5M11.5 15.5H16.5M11.5 18.5H16.5M11.5 21H16.5" stroke="#7fb0ea" stroke-width="1.6" fill="none"/><path d="M11.500 6.500H13" stroke="#7fb0ea" stroke-width="1.600"/></svg>
<svg class="i" style="left:525px;top:121px" width="26" height="20" viewBox="0 0 26 20"><text x="0" y="17" font-family="'Liberation Sans',sans-serif" font-weight="bold" font-size="13.500" fill="#444">AB</text><text x="19.500" y="9.500" font-family="'Liberation Sans',sans-serif" font-weight="bold" font-size="8" fill="#e03030">1</text></svg>
<svg class="i" style="left:556.5px;top:120px" width="26" height="25" viewBox="0 0 26 25"><circle cx="12.500" cy="10" r="9.500" fill="url(#gGlobe)" stroke="#3a70b8" stroke-width="0.600"/><path d="M9 1.500Q13 0.500 16 2.500L17.500 5L15 6L16.500 9Q16 12 13 13L11.500 11L9 10.500L7.500 7.500L9.500 5Z" fill="#7cbf4a" stroke="#5a9a30" stroke-width="0.400"/><path d="M4.500 5.500L7 9L6 12L4 11Q3 8 4.500 5.500ZM11 14L14 15L13 18.500L10.500 17Z" fill="#8ccf55"/><path d="M13 5.500Q15 6.500 14 9" fill="#e8d060"/><rect x="10" y="18.500" width="5" height="2.500" fill="#9aa2aa"/><rect x="1.500" y="19.500" width="22" height="4" rx="2" fill="#e8ecf0" stroke="#8a929a" stroke-width="0.800"/><rect x="9" y="19" width="7" height="4.500" rx="1" fill="#c8d0d8" stroke="#8a929a" stroke-width="0.600"/></svg>
<svg class="i" style="left:589.5px;top:120px" width="24" height="25" viewBox="0 0 24 25"><path d="M6.5 1.5H17.0L22.0 6.5V22.5Q22.0 23.5 21.0 23.5H6.5Q5.5 23.5 5.5 22.5V2.5Q5.5 1.5 6.5 1.5Z" fill="url(#gDoc)" stroke="#86b4f0" stroke-width="1"/><path d="M17.0 1.5V6.5H22.0" fill="#f4f9ff" stroke="#86b4f0" stroke-width="1" stroke-linejoin="round"/><path d="M8 8.5H20M8 12.5H20M8 14.5H20M8 16.5H20M8 18.5H20M8 20.5H20" stroke="#7fb0ea" stroke-width="1.2" fill="none"/><path d="M5 10.500H22" stroke="#f040a0" stroke-width="1.200"/><rect x="0.500" y="8" width="4.500" height="5" fill="#f040a0"/></svg>
<svg class="i" style="left:622px;top:123px" width="24" height="21" viewBox="0 0 24 21"><rect x="0.500" y="0.500" width="21" height="18.500" fill="#fdfeff" stroke="#a8c0d8" stroke-width="1"/><rect x="1" y="1" width="20" height="3.500" fill="#8fb8e4"/><path d="M1 4.500H21M1 9.500H21M1 14.500H21M5.500 4.500V19M10.500 4.500V19M15.500 4.500V19" stroke="#b4c8dc" stroke-width="1" fill="none"/><path d="M22 2V20H2" stroke="#d8d8d8" stroke-width="1" fill="none"/></svg>
<svg class="i" style="left:668.5px;top:56px" width="24" height="26" viewBox="0 0 24 26"><text x="0.800" y="20.300" font-family="'Liberation Sans',sans-serif" font-weight="bold" font-size="28" fill="url(#gBlue)" stroke="#3f86d0" stroke-width="0.400" textLength="20" lengthAdjust="spacingAndGlyphs">¶</text></svg>
<svg class="i" style="left:699px;top:57.5px" width="25" height="23" viewBox="0 0 25 23"><rect x="1" y="1" width="22.500" height="16" rx="1.500" fill="#e6f1fc" stroke="#3f86d0" stroke-width="2"/><path d="M4 7.500V4.500H7.500M17 4.500H20.500V7.500M20.500 10.500V13.500H17M7.500 13.500H4V10.500" stroke="#222" stroke-width="1.300" fill="none"/><path d="M10 18H14.500V20H10Z" fill="#3f86d0"/><path d="M7 22L9 19.500H15.500L17.500 22Z" fill="#4f92d8"/></svg>
<svg class="i" style="left:665px;top:87px" width="28" height="28" viewBox="0 0 28 28"><rect width="28" height="28" fill="#c7dcf6"/><path d="M2.100 12.200H12.600V2.500Z" fill="#d9c47a"/><path d="M15.500 2.500V12.200H25.800Z" fill="#5eaae2"/><path d="M2.100 15.400H12.600V25.600Z" fill="#4faa72"/><path d="M15.500 15.400H25.800L15.500 25.600Z" fill="#c25c7c"/></svg>
<svg class="i" style="left:700.5px;top:88px" width="22" height="25" viewBox="0 0 22 25"><path d="M2.5 1.5H14.5L19.5 6.5V22.5Q19.5 23.5 18.5 23.5H2.5Q1.5 23.5 1.5 22.5V2.5Q1.5 1.5 2.5 1.5Z" fill="url(#gDoc)" stroke="#86b4f0" stroke-width="1"/><path d="M14.5 1.5V6.5H19.5" fill="#f4f9ff" stroke="#86b4f0" stroke-width="1" stroke-linejoin="round"/><rect x="3.500" y="4.500" width="10" height="3" fill="#ecd860" stroke="#58b058" stroke-width="0.800"/><path d="M3 9.500H18" stroke="#f04040" stroke-width="1" stroke-dasharray="2.500 1.500"/><path d="M3.5 11.5H17.5M3.5 13.5H17.5M3.5 15.5H17.5" stroke="#9cc0ea" stroke-width="1" fill="none"/><path d="M3 17.500H18" stroke="#f04040" stroke-width="1" stroke-dasharray="2.500 1.500"/><rect x="3.500" y="19" width="14" height="3" fill="#ecd860" stroke="#58b058" stroke-width="0.800"/></svg>
<svg class="i" style="left:666.5px;top:120.5px" width="26" height="25" viewBox="0 0 26 25"><rect x="2" y="0.500" width="17" height="23" fill="#fdfeff" stroke="#a8c4e8" stroke-width="1"/><path d="M4 10.5H17M4 13.5H17M4 16.5H17M4 19.5H17M4 22H17" stroke="#5a90d0" stroke-width="1.3" fill="none"/><rect x="0.500" y="2.500" width="24" height="5" fill="#fbd048" stroke="#e8a030" stroke-width="1"/><path d="M3.500 3V5.500M6.500 3V4.500M9.500 3V5.500M12.500 3V4.500M15.500 3V5.500M18.500 3V4.500M21.500 3V5.500" stroke="#b87818" stroke-width="0.800"/></svg>
<svg class="i" style="left:701px;top:120.5px" width="22" height="25" viewBox="0 0 22 25"><rect x="0.500" y="0.500" width="19" height="23" fill="#fdfeff" stroke="#a8c4e8" stroke-width="1"/><path d="M8.5 5.5H18M8.5 8.5H18M8.5 11.5H18M8.5 14.5H18M8.5 17.5H18M8.5 20.5H18" stroke="#5a90d0" stroke-width="1.3" fill="none"/><rect x="2" y="0.500" width="5" height="23" fill="#fbd048" stroke="#e8a030" stroke-width="1"/><path d="M2.500 3.500H5M2.500 6.500H4M2.500 9.500H5M2.500 12.500H4M2.500 15.500H5M2.500 18.500H4M2.500 21.500H5" stroke="#b87818" stroke-width="0.800"/></svg>
<svg class="i" style="left:733.5px;top:57px" width="26" height="24" viewBox="0 0 26 24"><text x="0" y="11.500" font-family="'Liberation Sans',sans-serif" font-size="11.500" fill="#4a72d8" letter-spacing="0.300">ABC</text><path d="M4.500 12.500L11 20.500L24 7" stroke="#3a9a3a" stroke-width="2.600" fill="none" stroke-linejoin="miter"/><path d="M4.500 12.500L11 20.500L24 7" stroke="#b8eab0" stroke-width="1" fill="none"/></svg>
<svg class="i" style="left:764.5px;top:56px" width="26" height="26" viewBox="0 0 26 26"><circle cx="9" cy="8.500" r="7.800" fill="url(#gGlobe)"/><path d="M5 3.500Q8 1.500 11 2.500L10 5.500L12.500 7.500L10.500 11L7 10L5.500 6.500Z" fill="#e4f0fc" fill-opacity="0.850"/><path d="M2.500 8L4.500 10.500L4 13L2.500 11.500ZM11.500 11.500L14 10L14.500 12.500L12.500 14Z" fill="#e4f0fc" fill-opacity="0.800"/><path d="M11 14.500L14 13L18 18.500L21.500 11L25 13L18.500 24.500Z" fill="url(#gGreen)" stroke="#2a8a2a" stroke-width="0.600" stroke-linejoin="round"/></svg>
<svg class="i" style="left:734px;top:91px" width="26" height="22" viewBox="0 0 26 22"><g font-family="'Liberation Sans',sans-serif" font-size="13" fill="#444"><text x="0.500" y="9">ab</text><text x="0.500" y="20.500">cd</text></g><rect x="17" y="4.500" width="6" height="1.800" fill="#f02020"/></svg>
<svg class="i" style="left:769px;top:88px" width="18" height="26" viewBox="0 0 18 26"><path d="M8.500 1L16.500 0.500L10.500 9.500L15.500 9L2.500 24.500L6.500 13.500L2 14Z" fill="url(#gGreen)" stroke="#3aa030" stroke-width="0.800" stroke-linejoin="round"/><path d="M9 2L14 1.800L8 10.500" stroke="#d0f4c0" stroke-width="0.800" fill="none"/></svg>
<svg class="i" style="left:733.5px;top:121.5px" width="26" height="24" viewBox="0 0 26 24"><path d="M12.500 0.500L17.500 5.500H14.500V9H10.500V5.500H7.500Z" fill="#3cb83c" stroke="#2a962a" stroke-width="0.600" stroke-linejoin="round"/><rect x="0.500" y="11.500" width="24" height="11.500" rx="1.500" fill="#b4b4b4" stroke="#9a9a9a" stroke-width="1"/><g fill="#ececec"><rect x="2.5" y="13.5" width="1.700" height="1.700"/><rect x="2.5" y="16.1" width="1.700" height="1.700"/><rect x="5.1" y="13.5" width="1.700" height="1.700"/><rect x="5.1" y="16.1" width="1.700" height="1.700"/><rect x="7.7" y="13.5" width="1.700" height="1.700"/><rect x="7.7" y="16.1" width="1.700" height="1.700"/><rect x="10.3" y="13.5" width="1.700" height="1.700"/><rect x="10.3" y="16.1" width="1.700" height="1.700"/><rect x="12.9" y="13.5" width="1.700" height="1.700"/><rect x="12.9" y="16.1" width="1.700" height="1.700"/><rect x="15.5" y="13.5" width="1.700" height="1.700"/><rect x="15.5" y="16.1" width="1.700" height="1.700"/><rect x="18.1" y="13.5" width="1.700" height="1.700"/><rect x="18.1" y="16.1" width="1.700" height="1.700"/><rect x="20.7" y="13.5" width="1.700" height="1.700"/><rect x="20.7" y="16.1" width="1.700" height="1.700"/><rect x="2.500" y="18.800" width="1.700" height="1.700"/><rect x="5.100" y="18.800" width="1.700" height="1.700"/><rect x="7.700" y="18.800" width="9" height="1.700"/><rect x="17.800" y="18.800" width="1.700" height="1.700"/><rect x="20.400" y="18.800" width="2.300" height="1.700"/></g></svg>
<svg class="i" style="left:765.5px;top:120px" width="26" height="25" viewBox="0 0 26 25"><path d="M7.5 1.5H18.5L23.5 6.5V22.0Q23.5 23.0 22.5 23.0H7.5Q6.5 23.0 6.5 22.0V2.5Q6.5 1.5 7.5 1.5Z" fill="url(#gDoc)" stroke="#86b4f0" stroke-width="1"/><path d="M18.5 1.5V6.5H23.5" fill="#f4f9ff" stroke="#86b4f0" stroke-width="1" stroke-linejoin="round"/><path d="M9 8.5H21M9 10.5H21M9 12.5H21M9 14.5H21M9 16.5H21M9 18.5H21M9 20.5H21" stroke="#c4d8f2" stroke-width="1" fill="none"/><rect x="1" y="9" width="14" height="10" rx="2" fill="#f4fbf4" stroke="#3aa040" stroke-width="1.400"/><rect x="3.500" y="11.500" width="3" height="3" fill="#3aa040"/><path d="M8 12H12.500M8 14H12.500M3.500 16.500H12.500" stroke="#3aa040" stroke-width="1"/></svg>
<svg class="i" style="left:949.3px;top:56px" width="26" height="26" viewBox="0 0 26 26"><circle cx="12.500" cy="12.500" r="11.700" fill="url(#gHelp)" stroke="#5a94d4" stroke-width="0.600"/><ellipse cx="11" cy="7" rx="8" ry="5" fill="#fff" fill-opacity="0.250"/><text x="6.800" y="19.500" font-family="'Liberation Sans',sans-serif" font-weight="bold" font-size="18.500" fill="#fff">?</text></svg>
<svg class="i" style="left:949.5px;top:88.5px" width="26" height="26" viewBox="0 0 26 26"><circle cx="9.500" cy="15.500" r="9" fill="url(#gGlobe)"/><path d="M4 10Q7 8 9 10.500L8 14L5 16.500L2.500 14ZM8 18L11 17L12 21L9 23.500Z" fill="#9ac860" fill-opacity="0.900"/><path d="M11 6.500H22V16.500H11Z" fill="#f4f4f0" stroke="#c8c8c0" stroke-width="0.600"/><path d="M8.500 8L16.500 0.500L24.500 8" stroke="#f0a040" stroke-width="1.800" fill="#fdf6ea" stroke-linejoin="round"/><rect x="13" y="10.500" width="3.500" height="6" fill="#e89030"/><rect x="18" y="10.500" width="2.500" height="3" fill="#a8c8e8" stroke="#88a" stroke-width="0.300"/><circle cx="16.500" cy="6" r="1.300" fill="#c8dcf0" stroke="#88a" stroke-width="0.300"/></svg>
<svg class="i" style="left:949.5px;top:120.5px" width="28" height="28" viewBox="0 0 28 28"><path d="M13.67 6.39L13.67 7.61L11.71 8.28L11.38 9.07L12.29 10.93L11.43 11.79L9.57 10.88L8.78 11.21L8.11 13.17L6.89 13.17L6.22 11.21L5.43 10.88L3.57 11.79L2.71 10.93L3.62 9.07L3.29 8.28L1.33 7.61L1.33 6.39L3.29 5.72L3.62 4.93L2.71 3.07L3.57 2.21L5.43 3.12L6.22 2.79L6.89 0.83L8.11 0.83L8.78 2.79L9.57 3.12L11.43 2.21L12.29 3.07L11.38 4.93L11.71 5.72Z" fill="#fff" stroke="#6aa8ee" stroke-width="1.700" stroke-linejoin="round"/><circle cx="7.5" cy="7" r="2.3" fill="#fff" stroke="#6aa8ee" stroke-width="1.700"/><path d="M24.67 13.39L24.67 14.61L22.71 15.28L22.38 16.07L23.29 17.93L22.43 18.79L20.57 17.88L19.78 18.21L19.11 20.17L17.89 20.17L17.22 18.21L16.43 17.88L14.57 18.79L13.71 17.93L14.62 16.07L14.29 15.28L12.33 14.61L12.33 13.39L14.29 12.72L14.62 11.93L13.71 10.07L14.57 9.21L16.43 10.12L17.22 9.79L17.89 7.83L19.11 7.83L19.78 9.79L20.57 10.12L22.43 9.21L23.29 10.07L22.38 11.93L22.71 12.72Z" fill="#fff" stroke="#3fae3f" stroke-width="1.700" stroke-linejoin="round"/><circle cx="18.5" cy="14" r="2.3" fill="#fff" stroke="#3fae3f" stroke-width="1.700"/><path d="M10.58 18.55L10.58 19.45L9.06 19.93L8.82 20.51L9.56 21.92L8.92 22.56L7.51 21.82L6.93 22.06L6.45 23.58L5.55 23.58L5.07 22.06L4.49 21.82L3.08 22.56L2.44 21.92L3.18 20.51L2.94 19.93L1.42 19.45L1.42 18.55L2.94 18.07L3.18 17.49L2.44 16.08L3.08 15.44L4.49 16.18L5.07 15.94L5.55 14.42L6.45 14.42L6.93 15.94L7.51 16.18L8.92 15.44L9.56 16.08L8.82 17.49L9.06 18.07Z" fill="#fff" stroke="#f0923a" stroke-width="1.500" stroke-linejoin="round"/><circle cx="6" cy="19" r="1.5" fill="#fff" stroke="#f0923a" stroke-width="1.500"/></svg>
<svg class="i" style="left:181px;top:155.7px" width="13" height="13" viewBox="0 0 13 13"><path d="M11.77 5.43L11.77 6.57L9.83 7.16L9.53 7.89L10.48 9.68L9.68 10.48L7.89 9.53L7.16 9.83L6.57 11.77L5.43 11.77L4.84 9.83L4.11 9.53L2.32 10.48L1.52 9.68L2.47 7.89L2.17 7.16L0.23 6.57L0.23 5.43L2.17 4.84L2.47 4.11L1.52 2.32L2.32 1.52L4.11 2.47L4.84 2.17L5.43 0.23L6.57 0.23L7.16 2.17L7.89 2.47L9.68 1.52L10.48 2.32L9.53 4.11L9.83 4.84Z" fill="#58b4f0" stroke="#58b4f0" stroke-width="0.600" stroke-linejoin="round"/><circle cx="6" cy="6" r="1.8" fill="#fff" stroke="#58b4f0" stroke-width="0"/></svg>
<svg class="i" style="left:198.5px;top:155.5px" width="10" height="13" viewBox="0 0 10 13"><text x="0" y="11" font-family="'Liberation Sans',sans-serif" font-weight="bold" font-size="14" fill="#3c96ee">?</text></svg>
<svg class="i" style="left:213.2px;top:155.2px" width="13" height="13" viewBox="0 0 13 13"><rect x="0.300" y="0.300" width="11.600" height="11.600" rx="1.800" fill="#f08c40"/><path d="M3.200 3.200L9 9M9 3.200L3.200 9" stroke="#fff" stroke-width="2.300" stroke-linecap="round"/></svg>
<svg class="i" style="left:20px;top:179px" width="28" height="28" viewBox="0 0 28 28"><rect width="28" height="28" fill="#c7dcf6"/><rect x="3" y="4" width="20" height="4.300" rx="0.800" fill="#9c88dc"/><path d="M5 6H21" stroke="#c8bcf0" stroke-width="1"/><path d="M9 11.5H23M9 15.5H23M9 19.5H23M9 23.5H23" stroke="#a4b6d2" stroke-width="1.3" fill="none"/></svg>
<svg class="i" style="left:55px;top:181px" width="24" height="24" viewBox="0 0 24 24"><path d="M5.5 0.5H17.5L22.0 5.0V22.0Q22.0 23.0 21.0 23.0H5.5Q4.5 23.0 4.5 22.0V1.5Q4.5 0.5 5.5 0.5Z" fill="url(#gDoc)" stroke="#8ab0e0" stroke-width="1"/><path d="M17.5 0.5V5.0H22.0" fill="#f4f9ff" stroke="#8ab0e0" stroke-width="1" stroke-linejoin="round"/><path d="M6.5 6.5H20M6.5 12.5H20M6.5 18.5H20" stroke="#8fb8e8" stroke-width="1.3" fill="none"/><rect x="0" y="1" width="4.500" height="5" fill="#40e040"/><path d="M4 3.500H17.500" stroke="#40e040" stroke-width="1.300"/><rect x="0" y="7" width="4.500" height="5" fill="#4848f0"/><path d="M4 9.500H21" stroke="#4848f0" stroke-width="1.300"/><rect x="0" y="13" width="4.500" height="5" fill="#f048e8"/><path d="M4 15.500H21" stroke="#f048e8" stroke-width="1.300"/></svg>
<svg class="i" style="left:87.5px;top:180.5px" width="21" height="24" viewBox="0 0 21 24"><path d="M2 1H14.0L18.5 5.5V21.5Q18.5 22.5 17.5 22.5H2Q1 22.5 1 21.5V2Q1 1 2 1Z" fill="url(#gDoc)" stroke="#6aa8f0" stroke-width="1.3"/><path d="M14.0 1V5.5H18.5" fill="#f4f9ff" stroke="#6aa8f0" stroke-width="1.3" stroke-linejoin="round"/><g stroke="#8a8a8a" stroke-width="0.900" stroke-dasharray="3 0.800 1.500 0.800"><path d="M3 7.500H11M6 11.500H16M6 15.500H13.500M6 19.500H16"/></g></svg>
<svg class="i" style="left:120px;top:180px" width="22" height="25" viewBox="0 0 22 25"><path d="M1.5 1.5H15.5L20.0 6.0V22.5Q20.0 23.5 19.0 23.5H1.5Q0.5 23.5 0.5 22.5V2.5Q0.5 1.5 1.5 1.5Z" fill="#fbfdff" stroke="#8ab0e0" stroke-width="1"/><path d="M15.5 1.5V6.0H20.0" fill="#f4f9ff" stroke="#8ab0e0" stroke-width="1" stroke-linejoin="round"/><path d="M3 4.500H8.500M10.500 4.500H14.500M3 7.500H8.500M10.500 7.500H18" stroke="#f03030" stroke-width="1"/><path d="M2.500 11.500H18M2.500 14.500H18" stroke="#3838f0" stroke-width="1"/><path d="M2.500 18.500H6.500M8.500 18.500H12.500M14.500 18.500H18M2.500 20.500H6.500M8.500 20.500H12.500M14.500 20.500H18" stroke="#30d030" stroke-width="1"/></svg>
<svg class="i" style="left:153px;top:183px" width="20" height="22" viewBox="0 0 20 22"><text x="0" y="11.800" font-family="'Liberation Sans',sans-serif" font-weight="bold" font-size="16.500" fill="#5a9ce0" textLength="12" lengthAdjust="spacingAndGlyphs">¶</text><text x="3.500" y="20" font-family="'Liberation Serif',serif" font-style="italic" font-weight="bold" font-size="22" fill="#b060c8">A</text></svg>
<svg class="i" style="left:182.5px;top:182px" width="24" height="22" viewBox="0 0 24 22"><circle cx="3.700" cy="3.500" r="3.300" fill="url(#gBall)" stroke="#6a7888" stroke-width="0.400"/><text x="1.500" y="14" font-family="'Liberation Sans',sans-serif" font-size="8" font-weight="bold" fill="#5a98e0">1</text><rect x="1" y="16.500" width="5" height="4.500" fill="#f5a530"/><path d="M9 3.5H23M9 11H23M9 19H23" stroke="#5a5a5a" stroke-width="1.4" fill="none"/></svg>
<svg class="i" style="left:37.7px;top:212.8px" width="25" height="24" viewBox="0 0 25 24"><path d="M15.500 15.500L21.500 21.500" stroke="#9a6a30" stroke-width="4.200" stroke-linecap="round"/><path d="M15.500 15.500L21.500 21.500" stroke="#f0c080" stroke-width="2.800" stroke-linecap="round"/><circle cx="8.800" cy="8.800" r="7.800" fill="#eef6fd" stroke="#8ab4e4" stroke-width="1.500"/><path d="M4 6.500H13.500V8.500H10.300V14H7.300V8.500H4Z" fill="#48b048"/><path d="M7.300 10H10.300V14H7.300Z" fill="#c8ecc8" fill-opacity="0.600"/><path d="M8.800 16.500V19.500M6.800 20H10.800" stroke="#333" stroke-width="1"/></svg>
<svg class="i" style="left:72px;top:214px" width="21" height="23" viewBox="0 0 21 23"><rect x="0" y="0" width="20.500" height="4" fill="#cfe2f7"/><rect x="0" y="9" width="20.500" height="4" fill="#cfe2f7"/><rect x="0" y="18" width="20.500" height="4" fill="#cfe2f7"/><path d="M3 2.5H18M3 6.5H18M3 11.5H18M3 15.5H18M3 20.5H18" stroke="#707070" stroke-width="1" fill="none"/></svg>
<svg class="i" style="left:103.5px;top:213.8px" width="24" height="24" viewBox="0 0 24 24"><g transform="scale(0.93)"><path d="M3 0.500H9V3L9.500 4L10.500 9.500L11 14.500L9.800 16L10.300 22.500H1.500L2 16L0.500 14.500Q1 8 2.700 4L3 3Z" fill="url(#gBar)" stroke="#555" stroke-width="0.600" stroke-linejoin="round"/><path d="M2 16H9.800L10.300 22.500H1.500Z" fill="#4a4a4a" fill-opacity="0.450"/><path d="M3 3H9" stroke="#555" stroke-width="0.600"/><g transform="translate(23.500,0) scale(-1,1)"><path d="M3 0.500H9V3L9.500 4L10.500 9.500L11 14.500L9.800 16L10.300 22.500H1.500L2 16L0.500 14.500Q1 8 2.700 4L3 3Z" fill="url(#gBar)" stroke="#555" stroke-width="0.600" stroke-linejoin="round"/><path d="M2 16H9.800L10.300 22.500H1.500Z" fill="#4a4a4a" fill-opacity="0.450"/><path d="M3 3H9" stroke="#555" stroke-width="0.600"/></g><rect x="9.800" y="5.500" width="4" height="7.500" fill="#707070"/><path d="M10.500 6.300H13M10.500 8.300H13M10.500 10.300H13M10.500 12.200H13" stroke="#e0e0e0" stroke-width="0.900"/><path d="M11.750 5.500V13" stroke="#707070" stroke-width="0.800"/></g></svg>
<svg class="i" style="left:133.5px;top:213px" width="26" height="25" viewBox="0 0 26 25"><path d="M12 1Q22 0.500 23.500 8Q24 12 19 12.500Q16 13 17 16Q18.500 21 12 22.500Q3 23 1 14Q0 4 12 1Z" fill="#f7c860" stroke="#e0a030" stroke-width="0.800"/><circle cx="6.500" cy="4.800" r="2.200" fill="#38a838"/><circle cx="12.500" cy="3.500" r="2.200" fill="#e84848"/><circle cx="4" cy="10.500" r="2.200" fill="#78b0f0"/><circle cx="6" cy="16.500" r="2.200" fill="#707070"/><path d="M10 18.500L21 5.500Q22.500 4.500 23.500 5.500Q24 6.500 23 8L12.500 20.500Z" fill="#e8a860" stroke="#a87838" stroke-width="0.600"/><path d="M12.500 20.500L10 18.500Q6 19 4 23.500Q9 24.500 12.500 20.500Z" fill="#808080"/><path d="M12 10.500L16 8L17 10L13 13Z" fill="#fff" fill-opacity="0.900"/></svg>
<svg class="i" style="left:166px;top:213.5px" width="26" height="24" viewBox="0 0 26 24"><path d="M5.3 7V19.500Q5.3 22 3.4 22Q0.6 22 0.6 19.500V3.500Q0.6 0.600 3.4 0.600Q6.4 0.600 6.4 3.500V17.500Q6.4 19 5.3 19" fill="none" stroke="#48b0f0" stroke-width="1.100"/><path d="M3 8V17.500" stroke="#48b0f0" stroke-width="1" stroke-opacity="0.700"/><path d="M13.7 7V19.500Q13.7 22 11.8 22Q9.0 22 9.0 19.500V3.500Q9.0 0.600 11.8 0.600Q14.8 0.600 14.8 3.500V17.500Q14.8 19 13.7 19" fill="none" stroke="#f05858" stroke-width="1.100"/><path d="M11.4 8V17.500" stroke="#f05858" stroke-width="1" stroke-opacity="0.700"/><path d="M22.1 7V19.500Q22.1 22 20.2 22Q17.400000000000002 22 17.400000000000002 19.500V3.500Q17.400000000000002 0.600 20.2 0.600Q23.200000000000003 0.600 23.200000000000003 3.500V17.500Q23.200000000000003 19 22.1 19" fill="none" stroke="#48b868" stroke-width="1.100"/><path d="M19.8 8V17.500" stroke="#48b868" stroke-width="1" stroke-opacity="0.700"/></svg>
<svg class="i" style="left:6.5px;top:663.5px" width="25" height="20" viewBox="0 0 25 20"><path d="M0.500 10L9.500 1V6H23.500V14H9.500V19Z" fill="#e2e2e2" stroke="#ececec" stroke-width="1"/></svg>
<svg class="i" style="left:38px;top:663.5px" width="25" height="20" viewBox="0 0 25 20"><path d="M24.500 10L15.500 1V6H1.500V14H15.500V19Z" fill="#e2e2e2" stroke="#ececec" stroke-width="1"/></svg>
<svg class="i" style="left:71.5px;top:661.5px" width="24" height="23" viewBox="0 0 24 23"><rect x="0" y="3" width="14" height="3.500" fill="#dcdcdc"/><path d="M6 12.5H21M6 16.5H21M6 20.5H21" stroke="#ececec" stroke-width="1.2" fill="none"/><path d="M14 1L22 10M22 1L14 10" stroke="#d0d0d0" stroke-width="3"/></svg>
<svg class="i" style="left:104px;top:661.5px" width="24" height="23" viewBox="0 0 24 23"><rect x="0" y="3" width="14" height="3.500" fill="#dcdcdc"/><path d="M6 12.5H21M6 16.5H21M6 20.5H21" stroke="#d4d4d4" stroke-width="1.2" fill="none"/><path d="M14 1L22 10M22 1L14 10" stroke="#d0d0d0" stroke-width="3"/></svg>
<svg class="i" style="left:135px;top:664px" width="22" height="20" viewBox="0 0 22 20"><rect x="1" y="0.500" width="20" height="3.500" fill="#dedede"/><path d="M3.500 6.500Q1.500 9 2.500 13.500H5V16.500" stroke="#c8c8c8" stroke-width="1" fill="none"/><path d="M7 17.500H21" stroke="#c8c8c8" stroke-width="1.400"/></svg>
<svg class="i" style="left:167px;top:662px" width="24" height="24" viewBox="0 0 24 24"><rect width="24" height="24" fill="#f6f6f6"/><rect x="2" y="2.500" width="19" height="3.500" fill="#e0e0e0"/><path d="M7 10.5H20M7 14H20M7 17.5H20M7 21H20" stroke="#ececec" stroke-width="1.2" fill="none"/></svg>
<svg class="i" style="left:199px;top:662px" width="24" height="24" viewBox="0 0 24 24"><rect width="24" height="24" fill="#f6f6f6"/><rect x="2" y="2.500" width="19" height="3.500" fill="#dcdcdc"/><path d="M7 10.5H21M7 14H21M7 17.5H21M7 21H21" stroke="#dadada" stroke-width="1.4" fill="none"/></svg>
<svg class="i" style="left:8px;top:5.6px" width="18" height="18" viewBox="0 0 18 18"><circle cx="8.900" cy="9.050" r="7" fill="#fff" stroke="#3434f0" stroke-width="1.300"/><text x="8.950" y="12.300" text-anchor="middle" font-family="'Liberation Serif',serif" font-size="12.500" fill="#0a0ab4" stroke="#0a0ab4" stroke-width="0.200">A</text></svg>
<svg class="i" style="left:4px;top:32px" width="19" height="18" viewBox="0 0 19 18"><rect x="16" y="6" width="2" height="11" fill="#8e8e8e"/><rect x="4" y="15" width="14" height="2" fill="#8e8e8e"/><path d="M4.500 0.500H12L16.500 5V15.500H4.500Z" fill="#fff" stroke="#8e8e8e" stroke-width="1"/><path d="M12 0.500V5H16.500" fill="#fff" stroke="#8e8e8e" stroke-width="0.800"/><path d="M12 7.500H15M12 9.500H15M12 11.500H15M12 13.500H15" stroke="#8e8e8e" stroke-width="1"/><rect x="1.600" y="4.600" width="8.800" height="8.800" fill="#fff" stroke="#2a5aa8" stroke-width="1.300"/><text x="6" y="12.300" text-anchor="middle" font-family="'Liberation Sans',sans-serif" font-weight="bold" font-size="9" fill="#1f4fa0" stroke="#1f4fa0" stroke-width="0.300" textLength="7.500" lengthAdjust="spacingAndGlyphs">W</text></svg>
<svg class="i" style="left:465px;top:695.5px" width="22" height="14" viewBox="0 0 22 14"><path d="M1 12V3.500H4V1H8.500L10 2.500L11.500 1H15.500V12H10.500L10 12.800L9.500 12Z" fill="#fff" stroke="#000" stroke-width="1.300" stroke-linejoin="round"/><path d="M1.500 12.800H15" stroke="#000" stroke-width="1.500"/><path d="M4 3.500V10H9" stroke="#000" stroke-width="1" fill="none"/><path d="M10 3V12" stroke="#000" stroke-width="1"/><path d="M5.500 4H8M5.500 6H8M5.500 8H8M11.500 4H14M11.500 6H14M11.500 8H14M11.500 10H14" stroke="#aaa" stroke-width="0.800"/><path d="M15.500 0.800H20.500V3.500L18.500 6L20.500 8.500V11H15.500V8.500L17.500 6L15.500 3.500Z" fill="#ffff00" stroke="#0000ff" stroke-width="1.300"/></svg>
<svg class="a" style="left:36.0px;top:67px" width="7" height="7" viewBox="0 0 7 7"><path d="M0 0H7L3.500 6.800Z" fill="#3a3a3a"/></svg>
<svg class="a" style="left:79.0px;top:67px" width="7" height="7" viewBox="0 0 7 7"><path d="M0 0H7L3.500 6.800Z" fill="#3a3a3a"/></svg>
<svg class="a" style="left:36.0px;top:99px" width="7" height="7" viewBox="0 0 7 7"><path d="M0 0H7L3.500 6.800Z" fill="#3a3a3a"/></svg>
<svg class="a" style="left:79.0px;top:99px" width="7" height="7" viewBox="0 0 7 7"><path d="M0 0H7L3.500 6.800Z" fill="#3a3a3a"/></svg>
<svg class="a" style="left:122.0px;top:99px" width="7" height="7" viewBox="0 0 7 7"><path d="M0 0H7L3.500 6.800Z" fill="#3a3a3a"/></svg>
<svg class="a" style="left:232.5px;top:99px" width="7" height="7" viewBox="0 0 7 7"><path d="M0 0H7L3.500 6.800Z" fill="#3a3a3a"/></svg>
<svg class="a" style="left:200.5px;top:131px" width="7" height="7" viewBox="0 0 7 7"><path d="M0 0H7L3.500 6.800Z" fill="#3a3a3a"/></svg>
<svg class="a" style="left:342.5px;top:99px" width="7" height="7" viewBox="0 0 7 7"><path d="M0 0H7L3.500 6.800Z" fill="#3a3a3a"/></svg>
<svg class="a" style="left:278.5px;top:131px" width="7" height="7" viewBox="0 0 7 7"><path d="M0 0H7L3.500 6.800Z" fill="#3a3a3a"/></svg>
<svg class="a" style="left:321.5px;top:131px" width="7" height="7" viewBox="0 0 7 7"><path d="M0 0H7L3.500 6.800Z" fill="#3a3a3a"/></svg>
<svg class="a" style="left:364.5px;top:131px" width="7" height="7" viewBox="0 0 7 7"><path d="M0 0H7L3.500 6.800Z" fill="#3a3a3a"/></svg>
<svg class="a" style="left:420.5px;top:131px" width="7" height="7" viewBox="0 0 7 7"><path d="M0 0H7L3.500 6.800Z" fill="#3a3a3a"/></svg>
<svg class="a" style="left:463.5px;top:131px" width="7" height="7" viewBox="0 0 7 7"><path d="M0 0H7L3.500 6.800Z" fill="#3a3a3a"/></svg>
<svg class="a" style="left:506.5px;top:131px" width="7" height="7" viewBox="0 0 7 7"><path d="M0 0H7L3.500 6.800Z" fill="#3a3a3a"/></svg>
<svg class="a" style="left:553.5px;top:67px" width="7" height="7" viewBox="0 0 7 7"><path d="M0 0H7L3.500 6.800Z" fill="#3a3a3a"/></svg>
<svg class="a" style="left:596.5px;top:67px" width="7" height="7" viewBox="0 0 7 7"><path d="M0 0H7L3.500 6.800Z" fill="#3a3a3a"/></svg>
<svg class="a" style="left:639.5px;top:67px" width="7" height="7" viewBox="0 0 7 7"><path d="M0 0H7L3.500 6.800Z" fill="#3a3a3a"/></svg>
<svg class="a" style="left:553.5px;top:99px" width="7" height="7" viewBox="0 0 7 7"><path d="M0 0H7L3.500 6.800Z" fill="#3a3a3a"/></svg>
<svg class="a" style="left:596.5px;top:99px" width="7" height="7" viewBox="0 0 7 7"><path d="M0 0H7L3.500 6.800Z" fill="#3a3a3a"/></svg>
<svg class="a" style="left:639.5px;top:99px" width="7" height="7" viewBox="0 0 7 7"><path d="M0 0H7L3.500 6.800Z" fill="#3a3a3a"/></svg>
<svg class="a" style="left:649.5px;top:131px" width="7" height="7" viewBox="0 0 7 7"><path d="M0 0H7L3.500 6.800Z" fill="#3a3a3a"/></svg>
<svg class="a" style="left:794.5px;top:67px" width="7" height="7" viewBox="0 0 7 7"><path d="M0 0H7L3.500 6.800Z" fill="#3a3a3a"/></svg>
<svg class="a" style="left:794.5px;top:99px" width="7" height="7" viewBox="0 0 7 7"><path d="M0 0H7L3.500 6.800Z" fill="#3a3a3a"/></svg>
<svg class="a" style="left:979.0px;top:67px" width="7" height="7" viewBox="0 0 7 7"><path d="M0 0H7L3.500 6.800Z" fill="#3a3a3a"/></svg>
<svg class="a" style="left:979.0px;top:99px" width="7" height="7" viewBox="0 0 7 7"><path d="M0 0H7L3.500 6.800Z" fill="#3a3a3a"/></svg>
<svg class="a" style="left:979.0px;top:131px" width="7" height="7" viewBox="0 0 7 7"><path d="M0 0H7L3.500 6.800Z" fill="#3a3a3a"/></svg>
</body></html>
